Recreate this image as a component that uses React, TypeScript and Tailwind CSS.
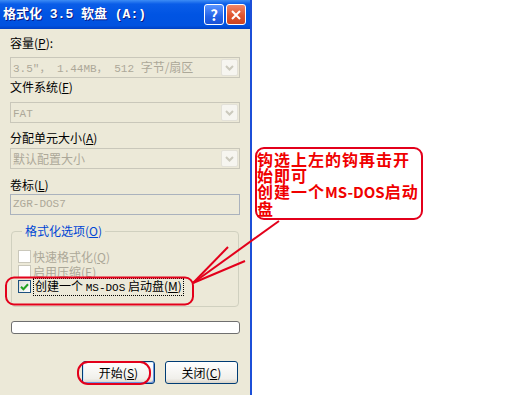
import React from 'react';

const cjk = "font-['Noto_Sans_CJK_SC',sans-serif]";
const mono = "font-['Liberation_Mono','Noto_Sans_CJK_SC',monospace]";

const Label = ({ children }: { children: React.ReactNode }) => (
    <div className="h-[14px] text-[12px] leading-[14px] text-black">{children}</div>
);

const Combo = ({ children, className = '' }: { children: React.ReactNode; className?: string }) => (
    <div className={`flex h-[21px] items-center border border-[#c9c7ba] bg-[#ece9d8] pl-[2px] pr-[1px] ${className}`}>
        <div className="flex-1 whitespace-pre text-[12px] leading-[16px] text-[#aca899]">{children}</div>
        <div className="flex h-[17px] w-[17px] items-center justify-center rounded-[2px] border border-[#e3e1d8] bg-[#f6f5f0]">
            <svg width="9" height="6" viewBox="0 0 9 6">
                <path d="M1 1l3.5 3.5L8 1" stroke="#cbc9bd" strokeWidth="2" fill="none" />
            </svg>
        </div>
    </div>
);

const Check = ({ checked = false, disabled = false }: { checked?: boolean; disabled?: boolean }) => (
    <div
        className={`flex h-[13px] w-[13px] shrink-0 items-center justify-center border ${
            disabled ? 'border-[#cac8bb] bg-white' : 'border-[#1c5180] bg-[linear-gradient(135deg,#dcdcd7,#ffffff)]'
        }`}
    >
        {checked && (
            <svg width="9" height="8" viewBox="0 0 9 8">
                <path d="M1 3.8l2.4 2.4L8 1.2" stroke="#21a121" strokeWidth="2" fill="none" />
            </svg>
        )}
    </div>
);

export default function App() {
    return (
        <div className={`relative flex h-[395px] w-[512px] overflow-hidden bg-white ${cjk}`}>
            {/* dialog window */}
            <div className="flex h-full w-[252px] shrink-0 flex-col border-r-2 border-[#1c4fd8]">
                <div className="flex h-[29px] items-center bg-[linear-gradient(180deg,#3d8cf5_0%,#0a5de8_14%,#0054e3_50%,#0052e0_88%,#0040c4_100%)] pl-[3px] pr-[4px]">
                    <span className={`flex-1 whitespace-pre text-[13px] font-bold text-white [text-shadow:1px_1px_#0a1883] ${mono}`}>
                        格式化 3.5 软盘 (A:)
                    </span>
                    <div className="flex gap-[2px]">
                        <div className="flex h-[21px] w-[20px] items-center justify-center rounded-[3px] border border-white bg-[linear-gradient(180deg,#5a95ff,#2463e8_60%,#1b52d6)] text-[15px] font-bold leading-none text-white">
                            ?
                        </div>
                        <div className="flex h-[21px] w-[20px] items-center justify-center rounded-[3px] border border-white bg-[linear-gradient(180deg,#f0876a,#e0552f_55%,#cc4421)]">
                            <svg width="10" height="10" viewBox="0 0 10 10">
                                <path d="M1 1l8 8M9 1l-8 8" stroke="white" strokeWidth="2" />
                            </svg>
                        </div>
                    </div>
                </div>

                <div className="flex flex-1 flex-col bg-[#ece9d8] px-[10px] pt-[7px]">
                    <Label>
                        容量(<u>P</u>):
                    </Label>
                    <Combo className="mt-[7px]">
                        <span className={`text-[11px] ${mono}`}>3.5"， 1.44MB， 512 </span>
                        <span>字节/扇区</span>
                    </Combo>

                    <div className="mt-[2px]">
                        <Label>
                            文件系统(<u>F</u>)
                        </Label>
                    </div>
                    <Combo className="mt-[8px]">
                        <span className={`text-[11px] ${mono}`}>FAT</span>
                    </Combo>

                    <div className="mt-[8px]">
                        <Label>
                            分配单元大小(<u>A</u>)
                        </Label>
                    </div>
                    <Combo className="mt-[3px]">默认配置大小</Combo>

                    <div className="mt-[9px]">
                        <Label>
                            卷标(<u>L</u>)
                        </Label>
                    </div>
                    <div className={`mt-[2px] flex h-[21px] items-center border border-[#aab2bd] bg-[#ece9d8] pl-[2px] text-[11px] text-[#aca899] ${mono}`}>
                        ZGR-DOS7
                    </div>

                    <fieldset className="mt-[9px] ml-[1px] mr-[1px] rounded-[4px] border border-[#d0d0bf] px-[6px] pb-[13px]">
                        <legend className="ml-[4px] px-[3px] text-[12px] leading-[14px] text-[#0046d5]">
                            格式化选项(<u>O</u>)
                        </legend>
                        <div className="mt-[12px] flex h-[13px] items-center gap-[2px] text-[12px] text-[#aca899]">
                            <Check disabled />
                            <span>
                                快速格式化(<u>Q</u>)
                            </span>
                        </div>
                        <div className="mt-[2px] flex h-[13px] items-center gap-[2px] text-[12px] text-[#aca899]">
                            <Check disabled />
                            <span>
                                启用压缩(<u>E</u>)
                            </span>
                        </div>
                        <div className="mt-[2px] flex h-[13px] items-center gap-[2px] text-[12px] text-black">
                            <Check checked />
                            <span className="border border-dotted border-black px-[1px] leading-[13px] whitespace-pre">
                                创建一个 <span className={`text-[11px] ${mono}`}>MS-DOS</span> 启动盘(<u>M</u>)
                            </span>
                        </div>
                    </fieldset>

                    <div className="mt-[14px] ml-[1px] h-[13px] rounded-[3px] border border-[#6f6f6f] bg-white" />

                    <div className="mt-[27px] flex justify-end gap-[10px] pr-[2px]">
                        <button className="h-[23px] w-[73px] rounded-[3px] border border-[#003c74] bg-[linear-gradient(180deg,#ffffff,#f0efea_80%,#d8d2c6)] text-[12px] text-black shadow-[inset_1px_1px_0_#cee7ff,inset_-1px_-1px_0_#6b93e0]">
                            开始(<u>S</u>)
                        </button>
                        <button className="h-[23px] w-[73px] rounded-[3px] border border-[#003c74] bg-[linear-gradient(180deg,#ffffff,#f0efea_80%,#d8d2c6)] text-[12px] text-black">
                            关闭(<u>C</u>)
                        </button>
                    </div>
                </div>
            </div>

            {/* annotation callout */}
            <div className="pl-[3px] pt-[147px]">
                <div className="h-[73px] w-[168px] rounded-[9px] border-2 border-[#e3001b] pt-[2px] text-[16px] leading-[16px] font-bold tracking-[1px] whitespace-nowrap text-[#f00000]">
                    <div>钩选上左的钩再击开</div>
                    <div>始即可</div>
                    <div>
                        创建一个<span className="text-[15px] tracking-[0px]">MS-DOS</span>启动
                    </div>
                    <div>盘</div>
                </div>
            </div>

            <svg className="pointer-events-none absolute left-0 top-0" width="512" height="395">
                <g fill="none" stroke="#e3001b" strokeWidth="2">
                    <rect x="6" y="277.5" width="187" height="27" rx="8" />
                    <rect x="78" y="362" width="72" height="22" rx="10" />
                    <line x1="279" y1="221" x2="193" y2="283" />
                    <line x1="228" y1="247" x2="193" y2="283" />
                    <line x1="245" y1="261" x2="193" y2="283" />
                </g>
            </svg>
        </div>
    );
}
